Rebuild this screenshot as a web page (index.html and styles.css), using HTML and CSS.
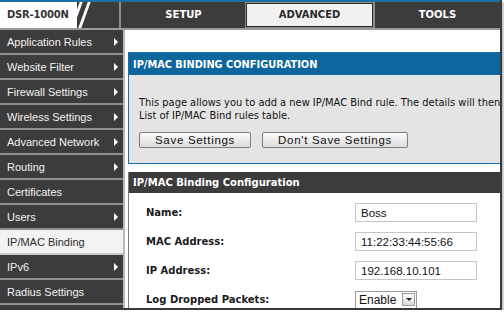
FILE: index.html
```html
<!DOCTYPE html>
<html lang="en">
<head>
  <meta charset="UTF-8">
  <title>DSR-1000N - IP/MAC Binding</title>
  <link rel="stylesheet" href="styles.css">
</head>
<body>
  <div class="window">
    <div class="header">
      <div class="logo">DSR-1000N</div>
      <div class="stripes">
        <span class="stripe"></span>
        <span class="stripe"></span>
      </div>
      <div class="tabs">
        <div class="tab">SETUP</div>
        <div class="tab active">ADVANCED</div>
        <div class="tab">TOOLS</div>
      </div>
    </div>

    <div class="main">
      <div class="sidebar">
        <div class="nav-item sub">Application Rules</div>
        <div class="nav-item sub">Website Filter</div>
        <div class="nav-item sub">Firewall Settings</div>
        <div class="nav-item sub">Wireless Settings</div>
        <div class="nav-item sub">Advanced Network</div>
        <div class="nav-item sub">Routing</div>
        <div class="nav-item">Certificates</div>
        <div class="nav-item sub">Users</div>
        <div class="nav-item current">IP/MAC Binding</div>
        <div class="nav-item sub">IPv6</div>
        <div class="nav-item">Radius Settings</div>
      </div>

      <div class="content">
        <div class="intro-box">
          <div class="intro-title">IP/MAC BINDING CONFIGURATION</div>
          <div class="intro-body">
            <p class="intro-text">This page allows you to add a new IP/MAC Bind rule. The details will then<br>List of IP/MAC Bind rules table.</p>
            <div class="buttons">
              <button class="btn">Save Settings</button>
              <button class="btn">Don't Save Settings</button>
            </div>
          </div>
        </div>

        <div class="section">
          <div class="section-title">IP/MAC Binding Configuration</div>
          <div class="form">
            <div class="form-row">
              <label class="form-label">Name:</label>
              <div class="field">Boss</div>
            </div>
            <div class="form-row">
              <label class="form-label">MAC Address:</label>
              <div class="field">11:22:33:44:55:66</div>
            </div>
            <div class="form-row">
              <label class="form-label">IP Address:</label>
              <div class="field">192.168.10.101</div>
            </div>
            <div class="form-row">
              <label class="form-label">Log Dropped Packets:</label>
              <div class="select">
                <span class="select-value">Enable</span>
                <span class="select-arrow"></span>
              </div>
            </div>
          </div>
        </div>
      </div>
    </div>
  </div>
</body>
</html>
```

FILE: styles.css
```css
body {
  margin: 0;
  padding: 0;
  background: #ffffff;
  font-family: 'Liberation Sans', Arial, sans-serif;
}

/* whole screen, with a dark edge right and bottom */
.window {
  width: 500px;
  height: 308px;
  overflow: hidden;
  border-right: 2px solid #3a3a3a;
  border-bottom: 2px solid #3a3a3a;
  box-shadow: 2px 2px 2px rgba(0, 0, 0, 0.25);
  background: #ffffff;
}

/* top bar */
.header {
  display: flex;
  height: 26px;
  border-top: 2px solid #1b6ea4;
  border-bottom: 2px solid #9a9a9a;
  background: #3c3c3c;
}
.logo {
  width: 69px;
  padding-left: 7px;
  background: #ffffff;
  color: #333333;
  font-family: 'DejaVu Sans', Verdana, sans-serif;
  font-weight: bold;
  font-size: 10px;
  line-height: 26px;
  letter-spacing: -0.2px;
}
.stripes {
  display: flex;
  gap: 5px;
  width: 46px;
  padding-left: 2px;
  background: linear-gradient(to right, #ffffff 0, #ffffff 4px, transparent 4px);
}
.stripe {
  width: 3px;
  height: 26px;
  background: #ffffff;
  transform: skewX(-20deg);
}
.tabs {
  display: flex;
  flex: 1;
}
.tab {
  width: 125px;
  border-left: 2px solid #8c8c8c;
  color: #ffffff;
  font-family: 'DejaVu Sans', Verdana, sans-serif;
  font-weight: bold;
  font-size: 10px;
  line-height: 26px;
  text-align: center;
}
.tab.active {
  margin: 1px 0;
  line-height: 22px;
  background: #f1f1f1;
  color: #2a2a2a;
  border: 1px solid #2a2a2a;
  outline: 1px solid #8c8c8c;
}

.main {
  display: flex;
}

/* left menu */
.sidebar {
  width: 123px;
  flex-shrink: 0;
  background: #3c3c3c;
  border-right: 2px solid #b9b9b9;
}
.nav-item {
  position: relative;
  height: 23px;
  padding-left: 7px;
  border-bottom: 2px solid #8f8f8f;
  color: #f2f2f2;
  font-size: 11px;
  line-height: 24px;
}
.nav-item.sub::after {
  content: "";
  position: absolute;
  right: 5px;
  top: 8px;
  border-left: 4px solid #ffffff;
  border-top: 4px solid transparent;
  border-bottom: 4px solid transparent;
}
.nav-item.current {
  background: #f2f2f2;
  color: #2e2e2e;
  border-bottom-color: #c8c8c8;
}

/* page content */
.content {
  flex: 1;
  padding: 22px 0 0 3px;
  min-width: 0;
}
.intro-box {
  width: 400px;
  border: 1px solid #1f6ea3;
  background: #e4e4e4;
}
.intro-title {
  height: 22px;
  padding-left: 4px;
  background: #0d679c;
  color: #ffffff;
  font-family: 'DejaVu Sans', Verdana, sans-serif;
  font-weight: bold;
  font-size: 9.8px;
  line-height: 23px;
}
.intro-body {
  padding: 21px 0 15px 10px;
}
.intro-text {
  margin: 0;
  color: #111111;
  font-family: 'DejaVu Sans', Verdana, sans-serif;
  font-size: 9.9px;
  line-height: 13px;
  white-space: nowrap;
}
.buttons {
  display: flex;
  gap: 11px;
  margin-top: 10px;
}
.btn {
  height: 16px;
  padding: 0 15px;
  border: 1px solid #7d7d7d;
  border-radius: 2px;
  background: linear-gradient(#fbfbfb, #dcdcdc);
  color: #111111;
  font-family: 'Liberation Sans', Arial, sans-serif;
  font-size: 11.5px;
  letter-spacing: 0.7px;
  line-height: 14px;
}

.section {
  margin-top: 8px;
  width: 400px;
  border-left: 1px solid #7a7a7a;
}
.section-title {
  height: 21px;
  padding-left: 4px;
  background: #3c3c3c;
  color: #ffffff;
  font-family: 'DejaVu Sans', Verdana, sans-serif;
  font-weight: bold;
  font-size: 10px;
  line-height: 21px;
}
.form {
  padding-top: 5px;
}
.form-row {
  display: flex;
  align-items: center;
  height: 29px;
  padding-left: 17px;
}
.form-label {
  width: 209px;
  color: #1a1a1a;
  font-family: 'DejaVu Sans', Verdana, sans-serif;
  font-weight: bold;
  font-size: 10px;
}
.field {
  width: 115px;
  height: 17px;
  padding-left: 5px;
  border: 1px solid #c4c4c4;
  color: #111111;
  font-size: 11.5px;
  line-height: 18px;
}
.select {
  display: flex;
  align-items: center;
  height: 16px;
  padding-left: 3px;
  border: 1px solid #9a9a9a;
  color: #111111;
  font-size: 12px;
}
.select-value {
  margin-right: 6px;
}
.select-arrow {
  position: relative;
  width: 13px;
  height: 13px;
  margin-right: 1px;
  border: 1px solid #9a9a9a;
  background: linear-gradient(#fafafa, #dadada);
  box-sizing: border-box;
}
.select-arrow::after {
  content: "";
  position: absolute;
  left: 3px;
  top: 4px;
  border-top: 3px solid #222222;
  border-left: 3px solid transparent;
  border-right: 3px solid transparent;
}
```
